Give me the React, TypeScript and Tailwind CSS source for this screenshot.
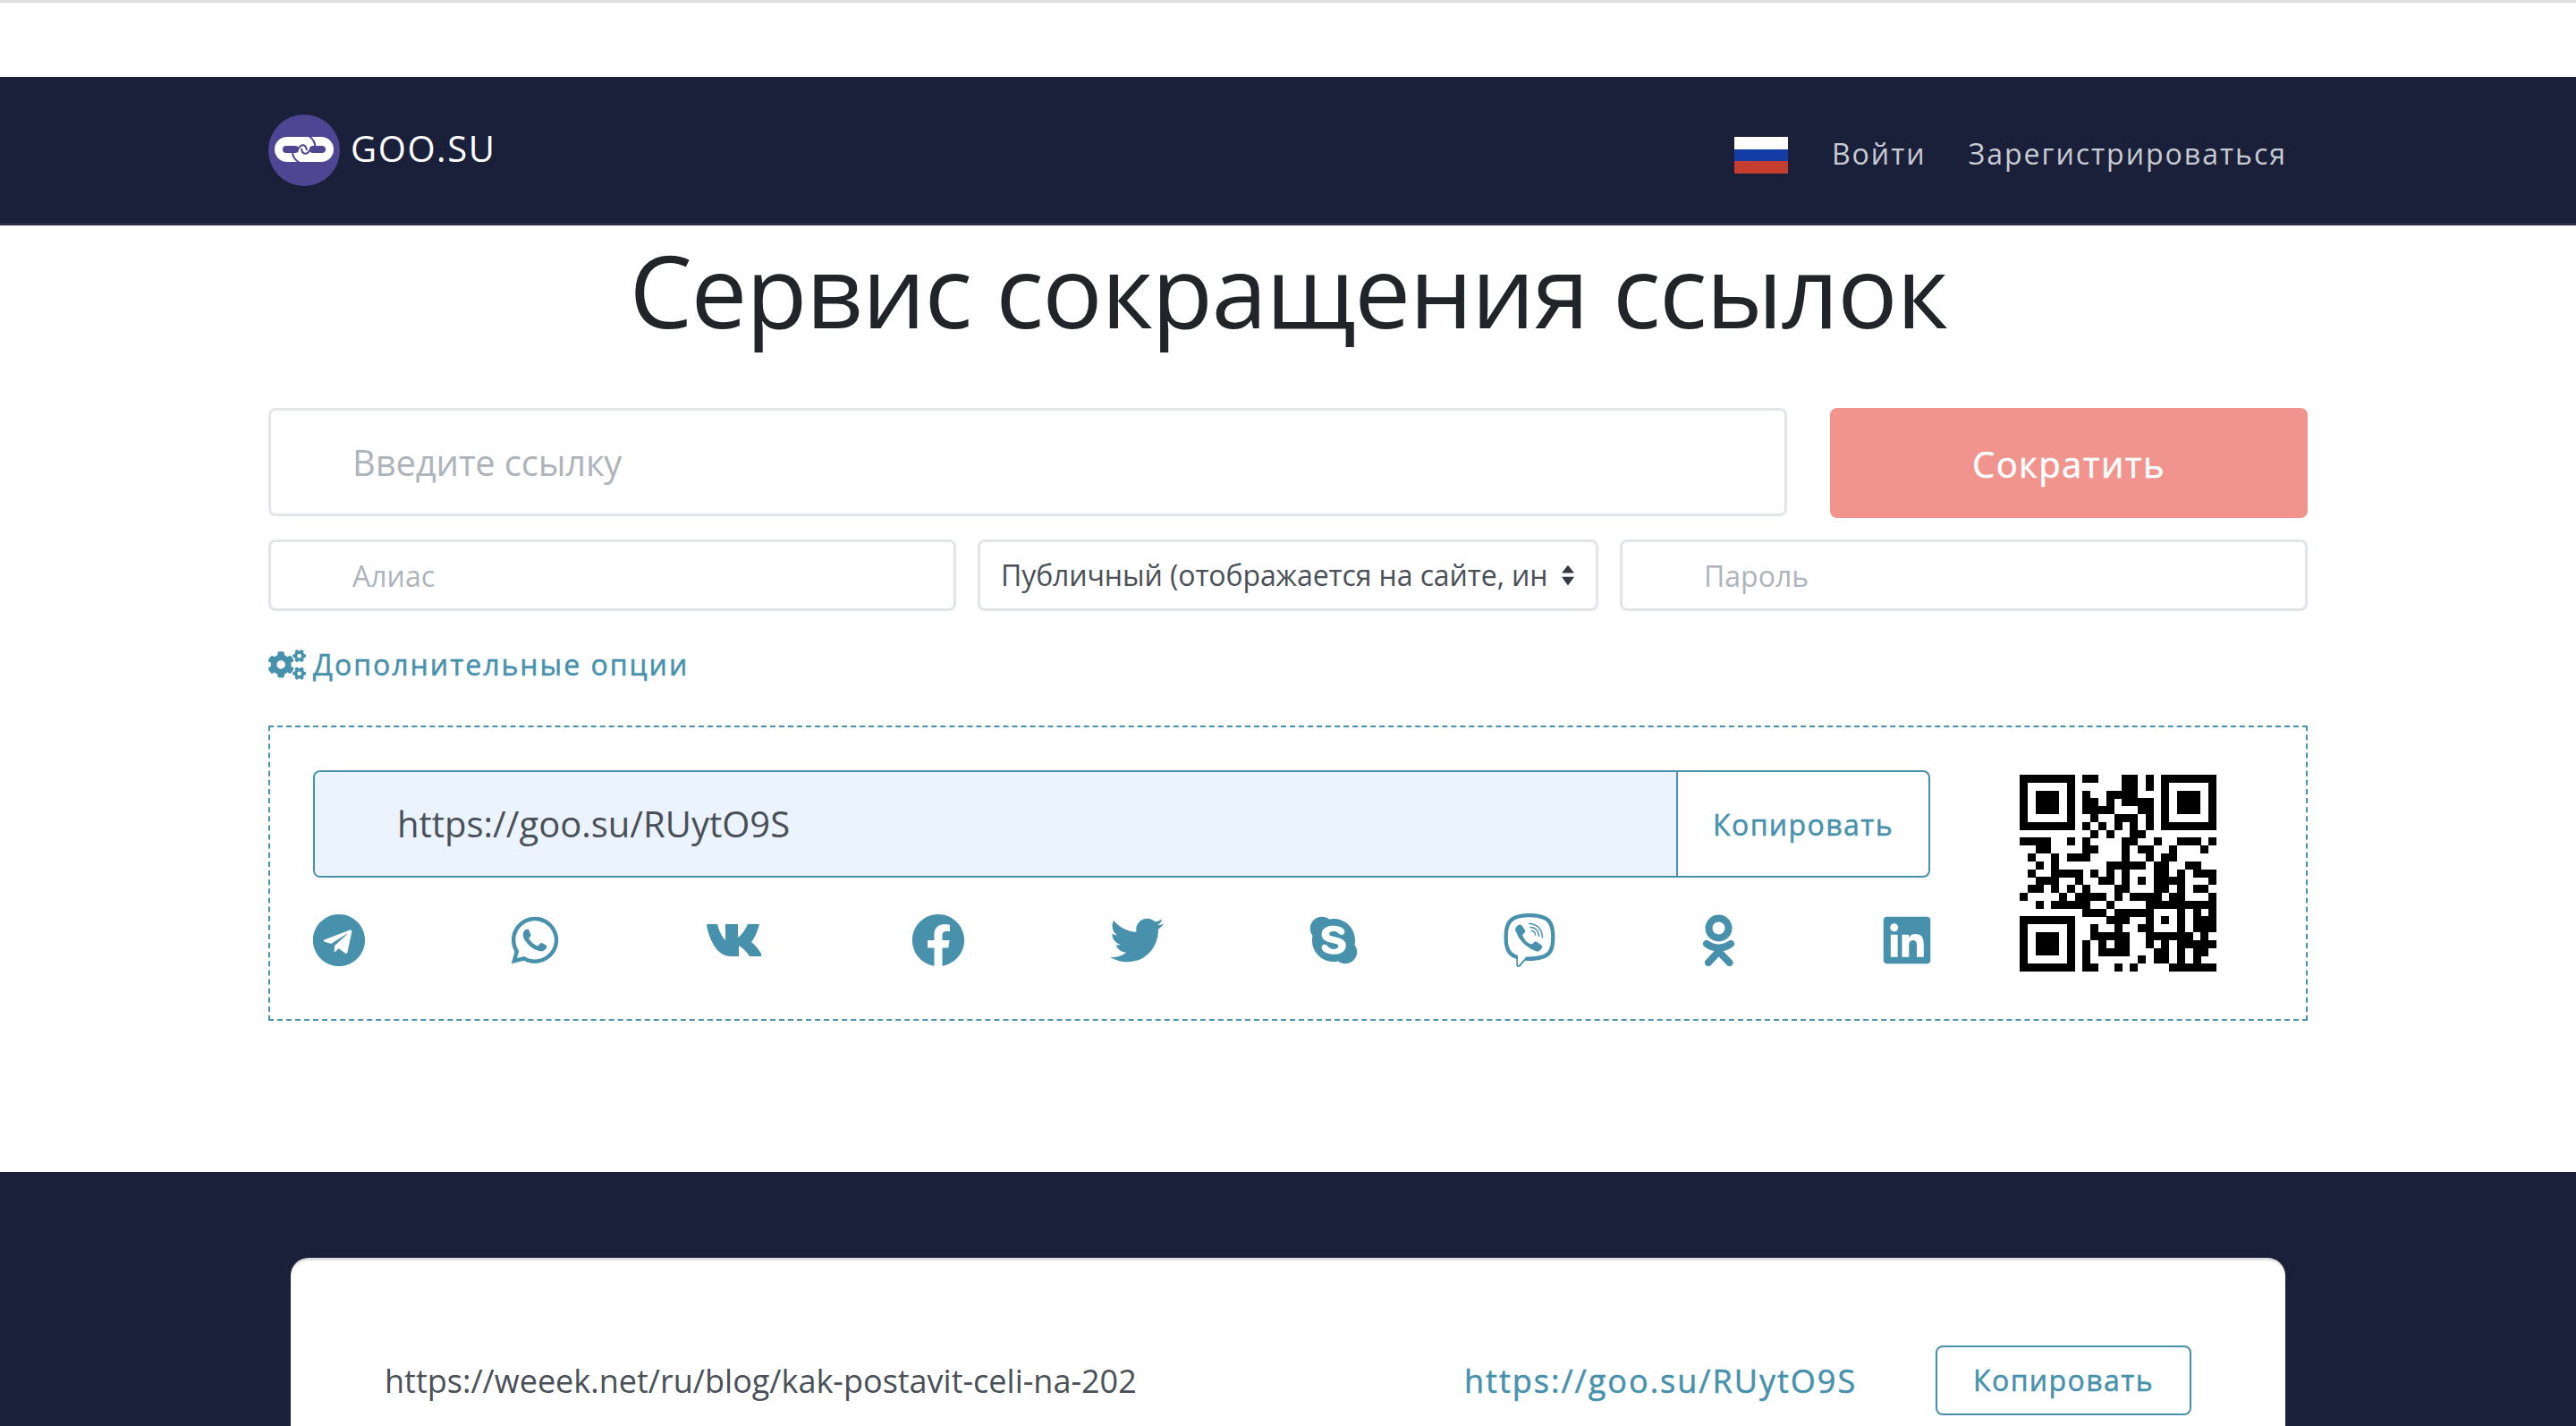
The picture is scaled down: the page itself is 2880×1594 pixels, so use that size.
import { FaCogs, FaFacebook, FaLinkedin, FaSkype, FaTelegram, FaTwitter, FaViber, FaWhatsapp } from 'react-icons/fa'

const font = { fontFamily: '"Open Sans", "Noto Sans", sans-serif' }

// black modules outside the three finder squares
const qrRows: number[][] = [
  [8, 9, 13, 14, 16],
  [13, 14, 16],
  [8, 11, 12, 13, 14],
  [8, 9, 11, 13, 14, 15, 16],
  [8, 9, 10, 11, 15, 16],
  [9, 12, 13, 14, 16],
  [8, 10, 12, 14, 16],
  [9, 11, 14, 15],
  [0, 1, 2, 3, 6, 8, 13, 14, 17, 20, 21, 22, 24],
  [2, 3, 8, 9, 13, 15, 16, 19, 23],
  [1, 4, 6, 7, 8, 13, 16, 18, 19],
  [2, 4, 11, 12, 13, 14, 15, 17, 18, 21, 22],
  [1, 4, 5, 6, 7, 9, 11, 13, 17, 18, 20, 22, 23, 24],
  [2, 3, 4, 7, 10, 11, 13, 15, 17, 18, 19, 20, 24],
  [1, 2, 4, 6, 8, 12, 13, 17, 18, 20, 22, 23],
  [0, 5, 7, 8, 9, 10, 12, 14, 15, 16, 17, 19, 20, 24],
  [2, 4, 5, 6, 7, 8, 11, 16, 17, 18, 19, 20, 21, 22, 23, 24],
  [8, 9, 10, 12, 13, 14, 15, 16, 20, 22, 24],
  [11, 12, 13, 16, 18, 20, 22, 23, 24],
  [9, 12, 15, 16, 20, 22, 23, 24],
  [9, 10, 11, 12, 13, 16, 17, 18, 19, 20, 21, 23],
  [8, 10, 12, 13, 16, 18, 20, 21, 22, 23, 24],
  [8, 10, 11, 12, 13, 17, 18, 20, 22, 23],
  [8, 15, 17, 18, 20, 22],
  [8, 9, 12, 14, 19, 20, 21, 22, 23, 24],
]

function Finder({ x, y }: { x: number; y: number }) {
  return (
    <g>
      <rect x={x} y={y} width="7" height="7" />
      <rect x={x + 1} y={y + 1} width="5" height="5" fill="#fff" />
      <rect x={x + 2} y={y + 2} width="3" height="3" />
    </g>
  )
}

function QrCode() {
  return (
    <svg viewBox="0 0 25 25" className="w-[220px] h-[220px] shrink-0 mt-[5px]" shapeRendering="crispEdges">
      <Finder x={0} y={0} />
      <Finder x={18} y={0} />
      <Finder x={0} y={18} />
      {qrRows.map((row, y) => row.map((x) => <rect key={`${x}-${y}`} x={x} y={y} width="1.02" height="1.02" />))}
    </svg>
  )
}

function Logo() {
  return (
    <svg viewBox="0 0 80 80" className="w-[80px] h-[80px] shrink-0">
      <circle cx="40" cy="40" r="40" fill="#4e4593" />
      <rect x="7" y="25" width="66" height="28" rx="14" fill="#fff" />
      <g fill="#4e4593">
        <rect x="16" y="35" width="18" height="8" rx="4" />
        <rect x="46" y="35" width="18" height="8" rx="4" />
      </g>
      <g fill="none" stroke="#4e4593" strokeWidth="2">
        <path d="M45 24 C50 27 53 32 52 38" />
        <path d="M27 42 C27 47 30 51 35 54" />
        <path d="M33 39 C37 32 42 33 43 40" />
        <path d="M47 39 C43 46 38 45 37 38" />
      </g>
    </svg>
  )
}

function VkIcon() {
  return (
    <svg viewBox="0 0 62 36" className="w-[62px] h-[36px] mr-[3px]" fill="currentColor">
      <path d="M1 0 H12 C14 8 17 14 21 18 V0 H35 V15 C39 12 43 7 46 0 H59 C57 8 54 15 50 20 C55 24 58 28 61 33 C62 35 61 36 60 36 H48 C45 31 41 27 36 24 V36 H27 C12 36 3 18 0 1 Z" />
    </svg>
  )
}

function OkIcon() {
  return (
    <svg viewBox="0 0 35 58" className="w-[35px] h-[58px]" fill="none" stroke="currentColor" strokeWidth="8" strokeLinecap="round">
      <circle cx="17.5" cy="15.5" r="11" />
      <path d="M4 33 C12 39 23 39 31 33" />
      <path d="M6 54 L17.5 41.5 L29.5 54" />
    </svg>
  )
}

export default function App() {
  // the icons sit with even gaps between their visible edges
  const shareIcons = [
    { icon: <FaTelegram size={60} className="shrink-0" />, width: 'w-[57px]' },
    { icon: <FaWhatsapp size={60} className="shrink-0" />, width: 'w-[52px]' },
    { icon: <VkIcon />, width: 'w-[65px]' },
    { icon: <FaFacebook size={60} className="shrink-0" />, width: 'w-[57px]' },
    { icon: <FaTwitter size={60} className="shrink-0" />, width: 'w-[57px]' },
    { icon: <FaSkype size={60} className="shrink-0" />, width: 'w-[52px]' },
    { icon: <FaViber size={60} className="shrink-0" />, width: 'w-[55px]' },
    { icon: <OkIcon />, width: 'w-[38px]' },
    { icon: <FaLinkedin size={60} className="shrink-0" />, width: 'w-[52px]' },
  ]

  return (
    <div className="h-[1594px] overflow-hidden bg-white text-[#212529]" style={font}>
      <div className="h-[86px] border-t-[3px] border-[#dfdfdf]" />

      <header className="h-[166px] bg-[#1b203a] border-b-[3px] border-[#2a2f4a] flex items-center justify-between pl-[300px] pr-[323px]">
        <a className="flex items-center gap-[12px]">
          <Logo />
          <span className="text-[40px] leading-none text-white tracking-[1.6px] mb-[4px]">GOO.SU</span>
        </a>
        <nav className="flex items-center text-[32px] tracking-[2px] text-[#c8cbd1] pt-[8px]">
          <div className="w-[60px] h-[41px] flex flex-col mt-[4px] mr-[49px]">
            <div className="flex-1 bg-white" />
            <div className="flex-1 bg-[#133da4]" />
            <div className="flex-1 bg-[#c53d2e]" />
          </div>
          <a className="mr-[47px]">Войти</a>
          <a>Зарегистрироваться</a>
        </nav>
      </header>

      <main className="px-[300px] h-[1058px]">
        <h1 className="text-center text-[112px] leading-[134px] tracking-[-1.5px] pt-[5px]">Сервис сокращения ссылок</h1>

        <div className="flex gap-[48px] mt-[65px]">
          <input
            readOnly
            placeholder="Введите ссылку"
            className="flex-1 h-[121px] border-[3px] border-[#e2e5ea] rounded-[8px] pl-[91px] text-[40px] tracking-[-0.2px] outline-none placeholder:text-[#aeb4bb]"
          />
          <button className="w-[534px] h-[123px] rounded-[8px] bg-[#f1948d] text-white text-[40px] tracking-[1.4px] [-webkit-text-stroke-width:0.5px] pt-[2px]">Сократить</button>
        </div>

        <div className="flex gap-[24px] mt-[24px]">
          <input
            readOnly
            placeholder="Алиас"
            className="w-[769px] h-[80px] border-[3px] border-[#e2e5ea] rounded-[8px] pl-[91px] text-[32px] outline-none placeholder:text-[#aeb4bb]"
          />
          <div className="relative w-[694px] h-[80px]">
            <select className="appearance-none w-full h-full bg-white border-[3px] border-[#e2e5ea] rounded-[8px] pl-[23px] pr-[53px] text-[32px] tracking-[-0.1px] text-[#495057] outline-none">
              <option>Публичный (отображается на сайте, индексируется)</option>
            </select>
            <svg viewBox="0 0 16 26" className="absolute right-[27px] top-[28px] w-[14px] h-[24px]" fill="#343a40">
              <path d="M8 0 L16 10 H0 Z" />
              <path d="M0 15 H16 L8 26 Z" />
            </svg>
          </div>
          <input
            readOnly
            placeholder="Пароль"
            className="flex-1 min-w-0 h-[80px] border-[3px] border-[#e2e5ea] rounded-[8px] pl-[91px] text-[32px] outline-none placeholder:text-[#aeb4bb]"
          />
        </div>

        <a className="flex items-center gap-[8px] mt-[38px] text-[32px] leading-[44px] tracking-[2px] [-webkit-text-stroke-width:0.5px] text-[#4791ad]">
          <FaCogs className="w-[42px] h-[34px] shrink-0" />
          Дополнительные опции
        </a>

        <section className="flex justify-between mt-[46px] h-[330px] border-2 border-dashed border-[#4791ad] pl-[48px] pt-[48px] pr-[100px]">
          <div className="w-[1808px]">
            <div className="flex h-[120px] border-2 border-[#4791ad] rounded-[8px] overflow-hidden">
              <input
                readOnly
                value="https://goo.su/RUytO9S"
                className="flex-1 min-w-0 bg-[#ebf3fe] pl-[92px] text-[40px] text-[#495057] outline-none"
              />
              <button className="w-[282px] border-l-2 border-[#4791ad] pt-[2px] text-[32px] tracking-[1.4px] [-webkit-text-stroke-width:0.5px] text-[#4791ad]">Копировать</button>
            </div>
            <div className="flex justify-between items-center mt-[40px] text-[#4791ad]">
              {shareIcons.map((item, i) => (
                <div key={i} className={`${item.width} h-[60px] flex items-center justify-center`}>
                  {item.icon}
                </div>
              ))}
            </div>
          </div>
          <QrCode />
        </section>
      </main>

      <footer className="bg-[#1b203a] h-[284px] px-[325px] pt-[96px]">
        <div className="h-[300px] bg-white rounded-[20px] border-t-[3px] border-[#dfdfdf] flex items-start pl-[105px] pt-[95px]">
          <span className="w-[1207px] text-[36px] leading-[80px] text-[#495057]">https://weeek.net/ru/blog/kak-postavit-celi-na-202</span>
          <a className="w-[527px] text-[36px] leading-[80px] tracking-[2px] [-webkit-text-stroke-width:0.5px] text-[#4791ad]">https://goo.su/RUytO9S</a>
          <button className="w-[286px] h-[78px] border-2 border-[#4791ad] rounded-[8px] text-[32px] tracking-[1.4px] [-webkit-text-stroke-width:0.5px] text-[#4791ad]">Копировать</button>
        </div>
      </footer>
    </div>
  )
}
